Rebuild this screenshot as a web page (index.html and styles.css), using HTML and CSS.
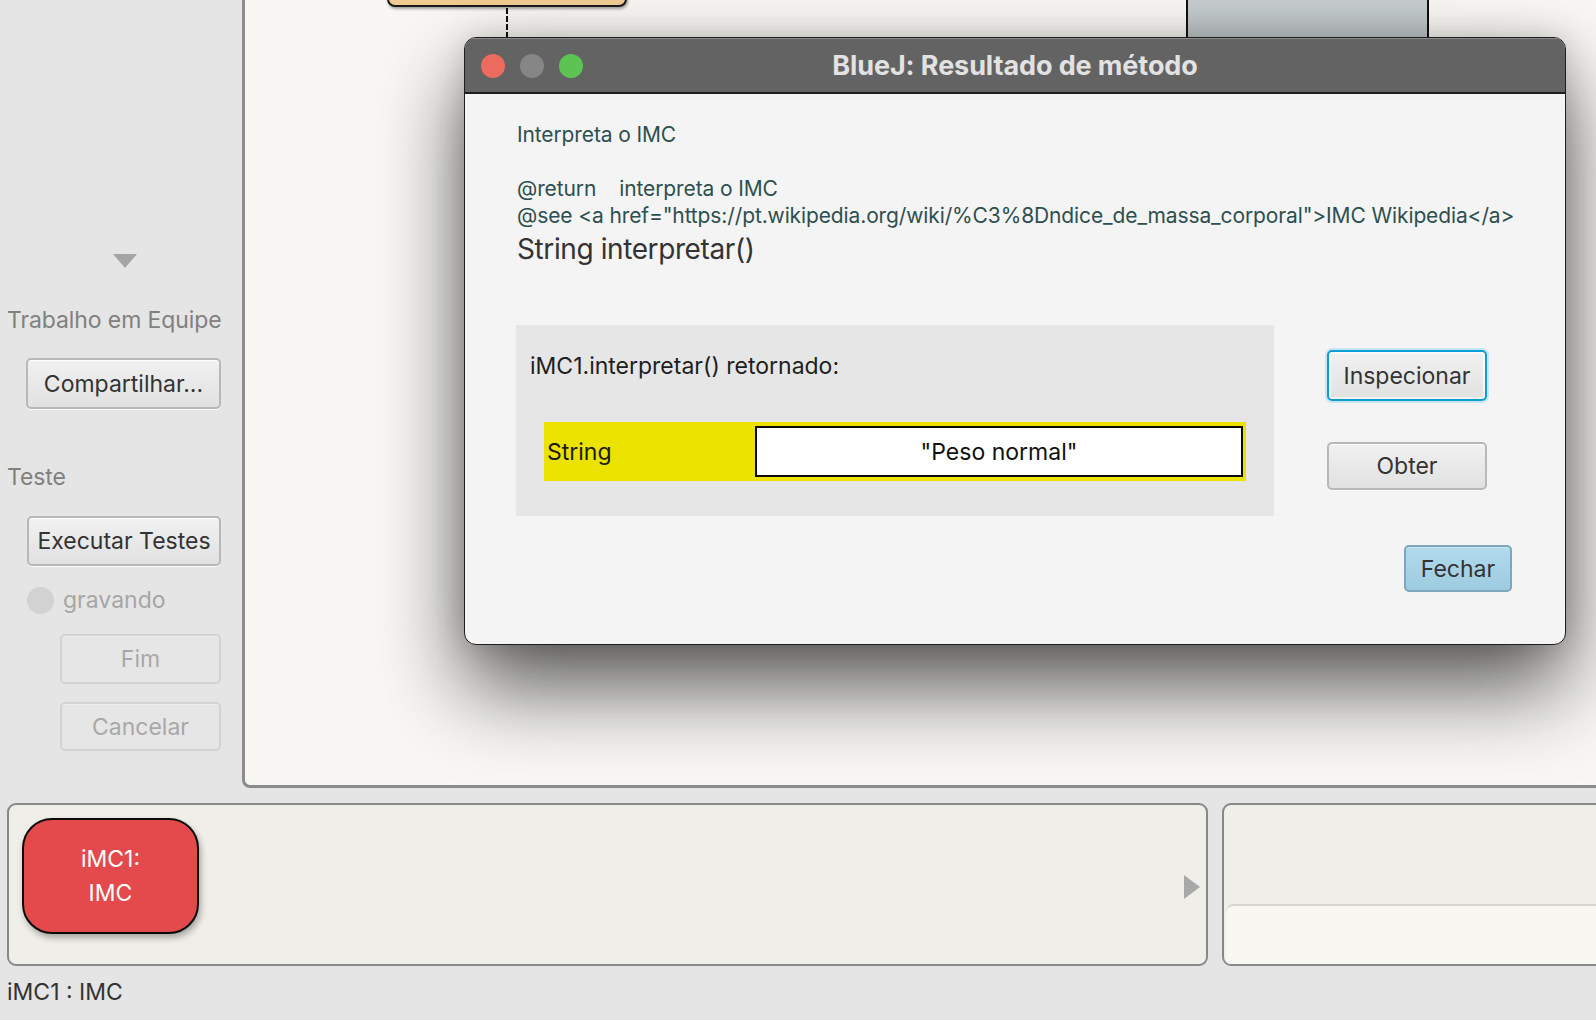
FILE: index.html
```html
<!DOCTYPE html>
<html lang="pt">
<head>
<meta charset="utf-8">
<title>BlueJ</title>
<link rel="stylesheet" href="styles.css">
</head>
<body>
<div class="app">
  <div class="top">
    <aside class="sidebar">
      <div class="tri-down"></div>
      <div class="section-label first">Trabalho em Equipe</div>
      <button class="btn share">Compartilhar...</button>
      <div class="section-label teste">Teste</div>
      <button class="btn run">Executar Testes</button>
      <div class="rec"><span class="dot"></span>gravando</div>
      <button class="btn disabled fim">Fim</button>
      <button class="btn disabled cancel">Cancelar</button>
    </aside>
    <main class="canvas">
      <div class="node class-orange"></div>
      <div class="node class-gray"></div>
      <div class="node dash"></div>
    </main>
  </div>
  <div class="bottom">
    <section class="bench">
      <div class="obj">iMC1:<br>IMC</div>
      <div class="tri-right"></div>
    </section>
    <section class="side-panel">
      <div class="side-upper"></div>
      <div class="side-lower"></div>
    </section>
  </div>
  <div class="status">iMC1 : IMC</div>

  <div class="dialog">
    <div class="titlebar">
      <span class="light red"></span>
      <span class="light gray"></span>
      <span class="light green"></span>
      <div class="title">BlueJ: Resultado de método</div>
    </div>
    <div class="dbody">
      <div class="doc">
        <div class="docline">Interpreta o IMC</div>
        <div class="docline">&nbsp;</div>
        <div class="docline">@return&nbsp;&nbsp;&nbsp;&nbsp;interpreta o IMC</div>
        <div class="docline">@see &lt;a href="https://pt.wikipedia.org/wiki/%C3%8Dndice_de_massa_corporal"&gt;IMC Wikipedia&lt;/a&gt;</div>
        <div class="sig">String interpretar()</div>
      </div>
      <div class="result-row">
        <div class="result">
          <div class="result-label">iMC1.interpretar() retornado:</div>
          <div class="value-row">
            <span class="vtype">String</span>
            <span class="vbox">"Peso normal"</span>
          </div>
        </div>
        <div class="actions">
          <button class="btn dbtn focus">Inspecionar</button>
          <button class="btn dbtn obter">Obter</button>
        </div>
      </div>
      <div class="close-row">
        <button class="btn primary">Fechar</button>
      </div>
    </div>
  </div>
</div>
</body>
</html>
```
FILE: styles.css
```css
* { box-sizing: border-box; }
html, body { margin: 0; padding: 0; }
body {
  width: 1596px;
  height: 1020px;
  overflow: hidden;
  background: #e5e5e5;
  font-family: Inter, "Noto Sans", "Liberation Sans", sans-serif;
  color: #333;
}
.app { position: relative; width: 1596px; height: 1020px; }

.top { display: flex; height: 788px; }
.sidebar {
  width: 242px;
  flex: none;
  display: flex;
  flex-direction: column;
  align-items: flex-start;
  padding-left: 7px;
}
.tri-down {
  margin-top: 254px;
  margin-left: 106px;
  width: 0; height: 0;
  border-left: 12px solid transparent;
  border-right: 12px solid transparent;
  border-top: 14px solid #a5a5a5;
}
.section-label {
  font-size: 23px;
  line-height: 28px;
  color: #808080;
  letter-spacing: -0.1px;
}
.section-label.first { margin-top: 38px; }
.section-label.teste { margin-top: 54px; }

.btn {
  font-family: inherit;
  font-size: 23px;
  color: #333;
  letter-spacing: 0;
  background: linear-gradient(#f1f1f1, #e1e1e1);
  border: 2px solid #b8b8b8;
  border-radius: 5px;
  box-shadow: inset 0 1px 0 #fff, 0 1px 0 #fafafa;
  padding: 0;
}
.btn.share { margin-top: 24px; margin-left: 19px; width: 195px; height: 51px; }
.btn.run { margin-top: 25px; margin-left: 20px; width: 194px; height: 50px; }
.rec {
  margin-top: 20px;
  margin-left: 20px;
  display: flex;
  align-items: center;
  font-size: 23px;
  line-height: 28px;
  color: #a6a6a6;
}
.dot {
  width: 27px; height: 27px;
  border-radius: 50%;
  background: #d2d2d2;
  margin-right: 9px;
}
.btn.disabled {
  color: #a8a8a8;
  background: #e6e6e6;
  border-color: #d3d3d3;
  box-shadow: inset 0 1px 0 #ededed;
  margin-left: 53px;
  width: 161px;
}
.btn.fim { margin-top: 20px; height: 50px; }
.btn.cancel { margin-top: 18px; height: 49px; }

.canvas {
  flex: 1;
  position: relative;
  background: #f8f7f3;
  border-left: 3px solid #8c8c8c;
  border-bottom: 3px solid #8c8c8c;
  border-bottom-left-radius: 8px;
  overflow: hidden;
}
.node { position: absolute; }
.class-orange {
  left: 142px; top: -20px;
  width: 240px; height: 27px;
  background: #f0cc92;
  border: 2px solid #1a1a1a;
  border-radius: 0 0 8px 8px;
  box-shadow: 1px 2px 3px rgba(0,0,0,0.35);
}
.class-gray {
  left: 941px; top: -10px;
  width: 243px; height: 60px;
  background: linear-gradient(#c8cfd1, #bcc4c6);
  border: 2px solid #111;
}
.dash {
  left: 261px; top: 8px;
  width: 0; height: 30px;
  border-left: 2px dashed #111;
}

.bottom { display: flex; margin-top: 15px; padding-left: 7px; }
.bench {
  position: relative;
  flex: none;
  width: 1201px;
  height: 163px;
  background: #efeee9;
  border: 2px solid #888;
  border-radius: 9px;
  padding: 13px 0 0 13px;
}
.obj {
  width: 177px;
  height: 116px;
  background: #e4494b;
  border: 2px solid #0a0a0a;
  border-radius: 30px;
  color: #fff;
  font-size: 23px;
  line-height: 34px;
  text-align: center;
  padding-top: 22px;
  box-shadow: 2px 4px 6px rgba(0,0,0,0.3);
}
.tri-right {
  position: absolute;
  left: 1175px; top: 70px;
  width: 0; height: 0;
  border-top: 12px solid transparent;
  border-bottom: 12px solid transparent;
  border-left: 16px solid #a8a8a8;
}
.side-panel {
  flex: none;
  margin-left: 14px;
  width: 400px;
  height: 163px;
  border: 2px solid #888;
  border-radius: 9px;
  background: #efeee9;
  display: flex;
  flex-direction: column;
  overflow: hidden;
}
.side-upper { height: 99px; }
.side-lower {
  flex: 1;
  margin-left: 2px;
  background: #f8f7f2;
  border-top: 2px solid #d5d5d3;
  border-top-left-radius: 8px;
}
.status {
  padding-left: 7px;
  margin-top: 12px;
  font-size: 23px;
  line-height: 28px;
  color: #333;
}

.dialog {
  position: absolute;
  left: 464px; top: 37px;
  width: 1102px; height: 608px;
  background: #f4f4f4;
  border: 1px solid #1e1e1e;
  border-radius: 12px;
  overflow: hidden;
  box-shadow: 0 42px 85px rgba(0,0,0,0.65), 0 0 30px rgba(0,0,0,0.15);
}
.titlebar {
  position: relative;
  height: 56px;
  background: #636363;
  border-top: 1px solid #8a8a8a;
  border-bottom: 2px solid #1e1e1e;
  display: flex;
  align-items: center;
  padding-left: 16px;
}
.light {
  width: 24px; height: 24px;
  border-radius: 50%;
  margin-right: 15px;
  flex: none;
}
.light.red { background: #ed6a5e; }
.light.gray { background: #868686; }
.light.green { background: #5dc353; }
.title {
  position: absolute;
  left: 0; right: 0; top: 0; bottom: 0;
  display: flex;
  align-items: center;
  justify-content: center;
  font-size: 27px;
  font-weight: 700;
  color: #e2e2e2;
  letter-spacing: -0.1px;
}
.dbody { padding: 27px 53px 0 52px; }
.doc { color: #2e4f4f; }
.docline {
  font-size: 21px;
  line-height: 27px;
  letter-spacing: -0.12px;
  white-space: pre;
}
.sig {
  font-size: 28px;
  line-height: 40px;
  color: #333;
  letter-spacing: -0.4px;
}
.result-row { display: flex; margin-top: 56px; margin-left: -1px; }
.result {
  width: 758px;
  height: 191px;
  background: #e6e6e6;
  padding: 27px 28px 0 14px;
}
.result-label {
  font-size: 23px;
  line-height: 28px;
  color: #1e1e1e;
}
.value-row {
  margin-top: 42px;
  margin-left: 14px;
  width: 702px;
  height: 59px;
  background: #ebe200;
  display: flex;
  align-items: center;
  padding: 4px 3px 4px 3px;
}
.vtype {
  width: 208px;
  font-size: 23px;
  color: #1a1a1a;
}
.vbox {
  flex: 1;
  height: 51px;
  background: #fff;
  border: 2px solid #0a0a0a;
  display: flex;
  align-items: center;
  justify-content: center;
  font-size: 23px;
  color: #111;
}
.actions {
  margin-left: 53px;
  padding-top: 25px;
  display: flex;
  flex-direction: column;
  gap: 41px;
}
.dbtn { width: 160px; }
.dbtn.focus {
  height: 51px;
  border: 2px solid #0a9fd6;
  box-shadow: 0 0 0 2px rgba(120,200,235,0.35), inset 0 0 0 2px rgba(255,255,255,0.6);
}
.dbtn.obter { height: 48px; }
.close-row { display: flex; justify-content: flex-end; margin-top: 29px; }
.btn.primary {
  width: 108px; height: 47px;
  background: linear-gradient(#b2daec, #9ecbe0);
  border-color: #7fa6ba;
  box-shadow: inset 0 1px 0 #c8e6f3;
}
```
